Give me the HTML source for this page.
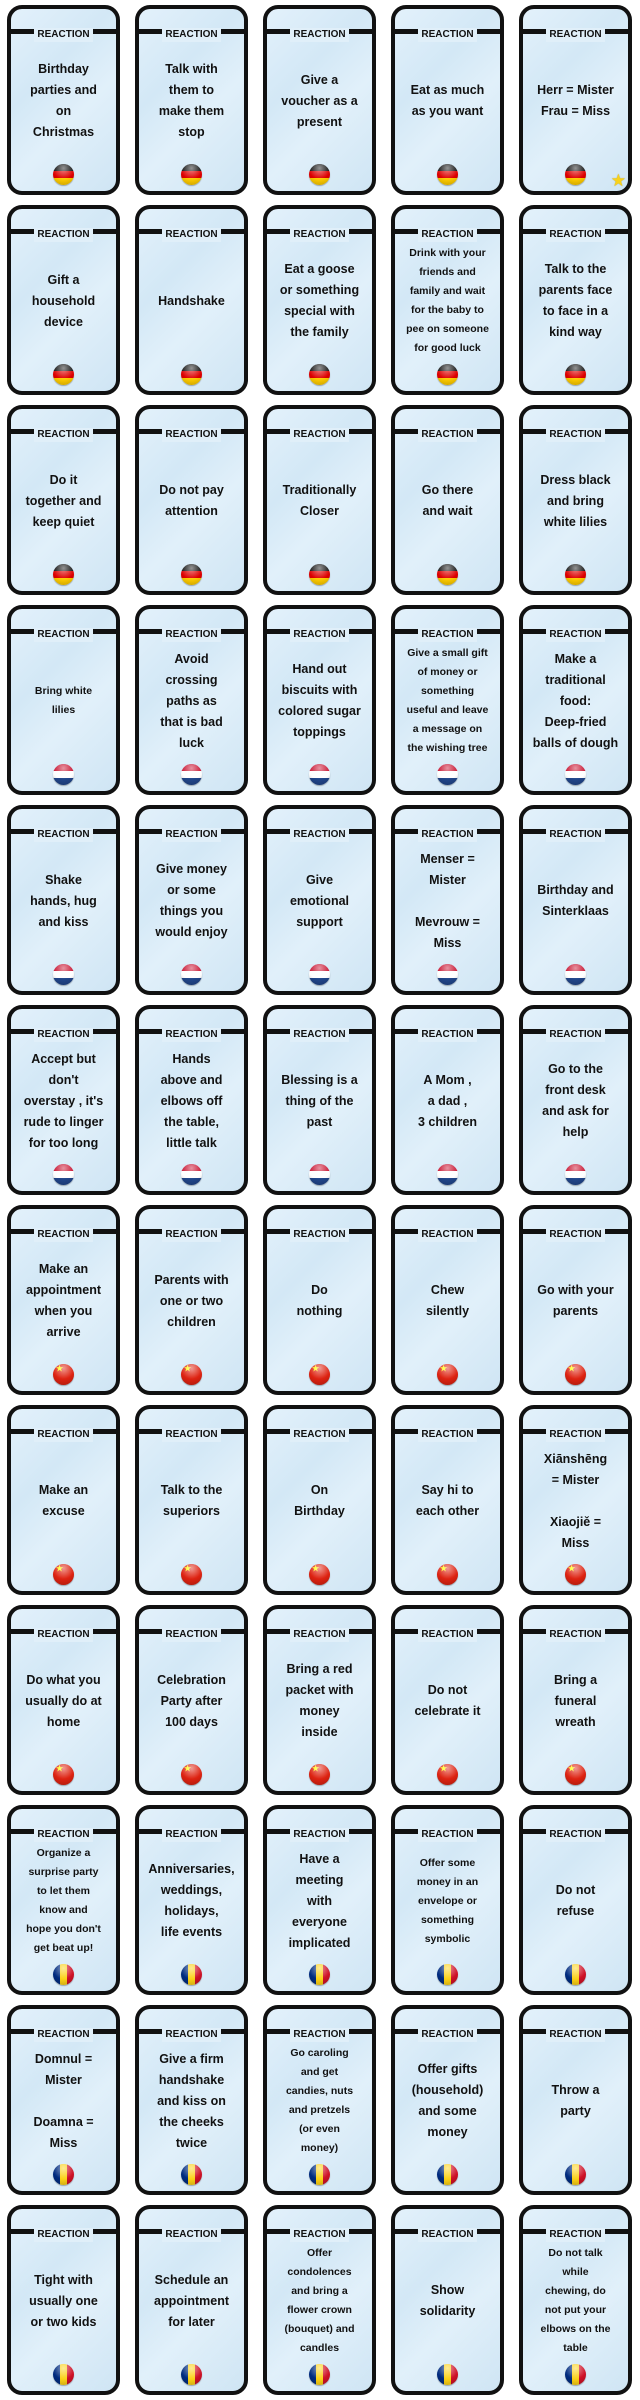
<!DOCTYPE html>
<html><head><meta charset="utf-8"><style>
html,body{margin:0;padding:0;background:#fff;}
body{width:640px;height:2400px;position:relative;overflow:hidden;font-family:"Liberation Sans",Arial,sans-serif;}
.c{position:absolute;width:105px;height:182px;border:4px solid #111;border-radius:15px;
background:linear-gradient(135deg,#e3f1fb 0%,#d3e8f6 35%,#e1f0fa 60%,#cfe5f4 100%);overflow:hidden;}
.h{position:absolute;left:0;right:0;top:20px;height:5px;background:#111;}
.hl{position:absolute;left:0;right:0;top:15px;text-align:center;}
.hl span{background:#e0eff9;padding:0 3px;font-size:10px;font-weight:bold;color:#111;line-height:14px;display:inline-block;}
.t{position:absolute;left:2px;right:2px;top:30px;height:124px;display:flex;align-items:center;justify-content:center;text-align:center;font-weight:bold;font-size:12.5px;line-height:21px;color:#111;}
.t.s{font-size:10.5px;line-height:19px;left:0;right:0;}
.f{position:absolute;left:42px;top:155px;width:21px;height:21px;border-radius:50%;overflow:hidden;box-shadow:0 1px 1px rgba(0,0,0,.3);}
.f:after{content:"";position:absolute;inset:0;border-radius:50%;background:radial-gradient(circle at 50% 20%,rgba(255,255,255,.55),rgba(255,255,255,0) 55%,rgba(0,0,0,.25) 100%);}
.de{background:linear-gradient(#111 0 33%,#d00 33% 66%,#fc0 66%);}
.nl{background:linear-gradient(#c8102e 0 33%,#fff 33% 66%,#21468b 66%);}
.ro{background:linear-gradient(90deg,#002b7f 0 33%,#fcd116 33% 66%,#ce1126 66%);}
.cn{background:#d21;}
.cn b{position:absolute;left:3px;top:1px;color:#ff0;font-size:8px;line-height:8px;}
.star{position:absolute;right:2px;bottom:2px;color:#f8d21c;font-size:17px;line-height:17px;text-shadow:0 0 1px #a80;}
</style></head><body>
<div id="g"></div>
<script>
var D=[
["Birthday<br>parties and<br>on<br>Christmas","de"],["Talk with<br>them to<br>make them<br>stop","de"],["Give a<br>voucher as a<br>present","de"],["Eat as much<br>as you want","de"],["Herr = Mister<br>Frau = Miss","de",0,1],
["Gift a<br>household<br>device","de"],["Handshake","de"],["Eat a goose<br>or something<br>special with<br>the family","de"],["Drink with your<br>friends and<br>family and wait<br>for the baby to<br>pee on someone<br>for good luck","de",1],["Talk to the<br>parents face<br>to face in a<br>kind way","de"],
["Do it<br>together and<br>keep quiet","de"],["Do not pay<br>attention","de"],["Traditionally<br>Closer","de"],["Go there<br>and wait","de"],["Dress black<br>and bring<br>white lilies","de"],
["Bring white<br>lilies","nl",1],["Avoid<br>crossing<br>paths as<br>that is bad<br>luck","nl"],["Hand out<br>biscuits with<br>colored sugar<br>toppings","nl"],["Give a small gift<br>of money or<br>something<br>useful and leave<br>a message on<br>the wishing tree","nl",1],["Make a<br>traditional<br>food:<br>Deep-fried<br>balls of dough","nl"],
["Shake<br>hands, hug<br>and kiss","nl"],["Give money<br>or some<br>things you<br>would enjoy","nl"],["Give<br>emotional<br>support","nl"],["Menser =<br>Mister<br><br>Mevrouw =<br>Miss","nl"],["Birthday and<br>Sinterklaas","nl"],
["Accept but<br>don't<br>overstay , it's<br>rude to linger<br>for too long","nl"],["Hands<br>above and<br>elbows off<br>the table,<br>little talk","nl"],["Blessing is a<br>thing of the<br>past","nl"],["A Mom ,<br>a dad ,<br>3 children","nl"],["Go to the<br>front desk<br>and ask for<br>help","nl"],
["Make an<br>appointment<br>when you<br>arrive","cn"],["Parents with<br>one or two<br>children","cn"],["Do<br>nothing","cn"],["Chew<br>silently","cn"],["Go with your<br>parents","cn"],
["Make an<br>excuse","cn"],["Talk to the<br>superiors","cn"],["On<br>Birthday","cn"],["Say hi to<br>each other","cn"],["Xiānshēng<br>= Mister<br><br>Xiaojiě =<br>Miss","cn"],
["Do what you<br>usually do at<br>home","cn"],["Celebration<br>Party after<br>100 days","cn"],["Bring a red<br>packet with<br>money<br>inside","cn"],["Do not<br>celebrate it","cn"],["Bring a<br>funeral<br>wreath","cn"],
["Organize a<br>surprise party<br>to let them<br>know and<br>hope you don't<br>get beat up!","ro",1],["Anniversaries,<br>weddings,<br>holidays,<br>life events","ro"],["Have a<br>meeting<br>with<br>everyone<br>implicated","ro"],["Offer some<br>money in an<br>envelope or<br>something<br>symbolic","ro",1],["Do not<br>refuse","ro"],
["Domnul =<br>Mister<br><br>Doamna =<br>Miss","ro"],["Give a firm<br>handshake<br>and kiss on<br>the cheeks<br>twice","ro"],["Go caroling<br>and get<br>candies, nuts<br>and pretzels<br>(or even<br>money)","ro",1],["Offer gifts<br>(household)<br>and some<br>money","ro"],["Throw a<br>party","ro"],
["Tight with<br>usually one<br>or two kids","ro"],["Schedule an<br>appointment<br>for later","ro"],["Offer<br>condolences<br>and bring a<br>flower crown<br>(bouquet) and<br>candles","ro",1],["Show<br>solidarity","ro"],["Do not talk<br>while<br>chewing, do<br>not put your<br>elbows on the<br>table","ro",1]
];
var h="";
D.forEach(function(d,i){var r=Math.floor(i/5),c=i%5;
h+='<div class="c" style="left:'+(7+c*128)+'px;top:'+(5+r*200)+'px"><div class="h"></div><div class="hl"><span>REACTION</span></div><div class="t'+(d[2]?' s':'')+'"><div>'+d[0]+'</div></div><div class="f '+d[1]+'">'+(d[1]=="cn"?'<b>★</b>':'')+'</div>'+(d[3]?'<div class="star">★</div>':'')+'</div>';});
document.getElementById("g").innerHTML=h;
</script>
</body></html>
